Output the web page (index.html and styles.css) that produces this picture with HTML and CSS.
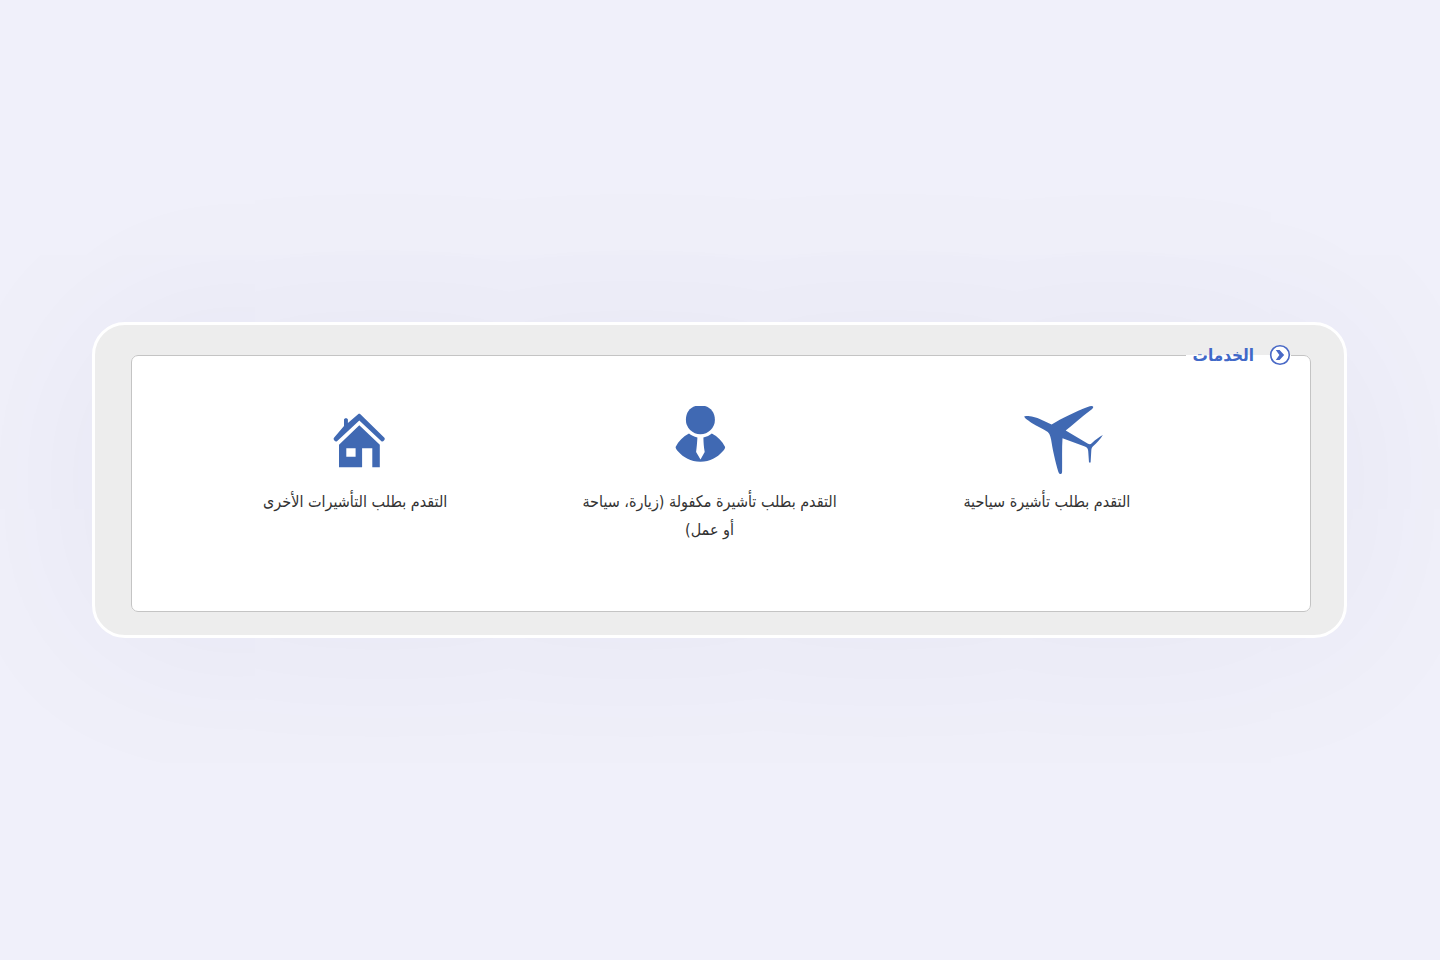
FILE: index.html
```
<!DOCTYPE html>
<html lang="ar" dir="rtl">
<head>
<meta charset="utf-8">
<meta name="viewport" content="width=device-width, initial-scale=1">
<title>الخدمات</title>
<link rel="stylesheet" href="styles.css">
</head>
<body class="page">
<main class="card">
  <fieldset class="services">
    <legend class="services-title">
      <svg class="title-icon" viewBox="0 0 22 22" aria-hidden="true"><circle cx="11" cy="11" r="9.3" fill="#fff" stroke="#4969c6" stroke-width="1.6"/><path d="M6.800 6h3.800l4.600 5-4.600 5H6.800l3.600-5z" fill="#4969c6"/></svg>
      <span>الخدمات</span>
    </legend>
    <ul class="service-list">
      <li class="service">
        <a class="service-link" href="#tourist">
          <svg class="service-icon plane" viewBox="991 400 112 80" aria-hidden="true"><path d="M1024.300 416.600c1-1.400 11-.1 16.500 2.900l10.800 5c10-6 24-13 36-17.500 3-1.200 5.200-1.200 5.600-.2.3 1-1 2.300-3 3.600-8 6.200-17 13.600-24.500 20.200l22.300 13.100c1.600.8 2.600.6 4-.7 3.500-3.300 7.500-6.200 10.800-8-2.300 3.900-5.800 8-9.500 11-1.500 1.300-1.900 2.500-2 4.600l-.7 12h-1.600l-.8-11.600c-.2-2.600-1-3.700-3.300-4.600l-22.400-8.200c-.7 10-.2 21-.4 33.200-.1 3.400-2.700 3.600-3.800.3-2.900-10-5.300-20.500-6.500-28-.9-5.500-1.500-9.200-4-11.600-4.500-3.500-11-5.600-16.500-9.400-3.500-2.300-7-4.800-7-6.100z"/></svg>
          <span class="service-label">التقدم بطلب تأشيرة سياحية</span>
        </a>
      </li>
      <li class="service">
        <a class="service-link" href="#sponsored">
          <svg class="service-icon person" viewBox="675 400 70 80" aria-hidden="true"><path d="M695.500 406h9.500c6 1.700 9.900 7 9.900 13.700a14.500 14.500 0 1 1-29 0c0-6.700 3.600-12 9.600-13.700z"/><path d="M689 433.600c2 1.600 5 3.200 8.400 4-.3 5-.6 9.500-1.300 14.500l4.400 7.500 4.200-7.500c-.9-5-1.200-9.500-1.300-14.500 3.400-.8 6.200-2.200 8.400-4 6 3 10.300 7.700 13.300 13.400.2 1.300-1 3-2.800 4.800-5 5.600-12 9.900-21.900 9.900s-17-4.300-22-9.900c-1.700-1.800-2.900-3.500-2.800-4.800 3-5.700 7.400-10.400 13.400-13.400z"/></svg>
          <span class="service-label">التقدم بطلب تأشيرة مكفولة (زيارة، سياحة أو عمل)</span>
        </a>
      </li>
      <li class="service">
        <a class="service-link" href="#other">
          <svg class="service-icon home" viewBox="326 400 60 80" aria-hidden="true"><path d="M345 426v-6.200c0-2 3.900-2 3.900 0v3.200l10.200-8.700c.8-.6 1.500-.6 2.300 0l24 23.500c1.300 1.500-1.200 4.700-3 3.500L360.300 420.500 338 441.300c-1.800 1.200-4.300-2-3-3.500z"/><path fill-rule="evenodd" d="M340 444.700l20.300-19.500 20.500 19.500v22.500h-7.500v-19h-10.200v19H340zM347.300 448.300v8.400h9.300v-8.400z"/></svg>
          <span class="service-label">التقدم بطلب التأشيرات الأخرى</span>
        </a>
      </li>
    </ul>
  </fieldset>
</main>
</body>
</html>
```
FILE: styles.css
```
* { box-sizing: border-box; }

.page {
  margin: 0;
  min-height: 100vh;
  padding: 24px 93px 24px 92px;
  display: flex;
  align-items: center;
  background: #f0f0fa;
  color: #333;
  font-family: "DejaVu Sans Condensed", "DejaVu Sans", Arial, sans-serif;
}

.card {
  flex: 1;
  padding: 18px 33px 23px 36px;
  border: 3px solid #fff;
  border-radius: 33px;
  background: #ededed;
  box-shadow: 0 0 200px rgba(40, 40, 100, 0.05);
}

.services {
  margin: 0;
  padding: 0;
  min-width: 0;
  border: 1px solid #c4c4c4;
  border-radius: 7px;
  background: #fff;
}

.services-title {
  display: flex;
  align-items: center;
  gap: 15px;
  margin-right: 19px;
  padding: 0 0 0 7px;
  height: 24px;
  color: #4169c8;
  font-size: 17px;
  line-height: 24px;
  font-weight: bold;
}

.title-icon { width: 22px; height: 22px; }

.service-list {
  display: grid;
  grid-template-columns: 320fr 354fr 354fr;
  min-height: 244px;
  margin: 0;
  padding: 33px 103px 48px 46px;
  list-style: none;
}

.service { display: flex; justify-content: center; }

.service-link {
  display: flex;
  flex-direction: column;
  align-items: center;
  gap: 8px;
  max-width: 264px;
  color: inherit;
  text-align: center;
  text-decoration: none;
}

.service-icon { height: 80px; fill: #4069b3; }
.plane { width: 112px; }
.person { width: 70px; }
.home { width: 60px; }

.service-label { font-size: 16px; line-height: 28px; }
```
